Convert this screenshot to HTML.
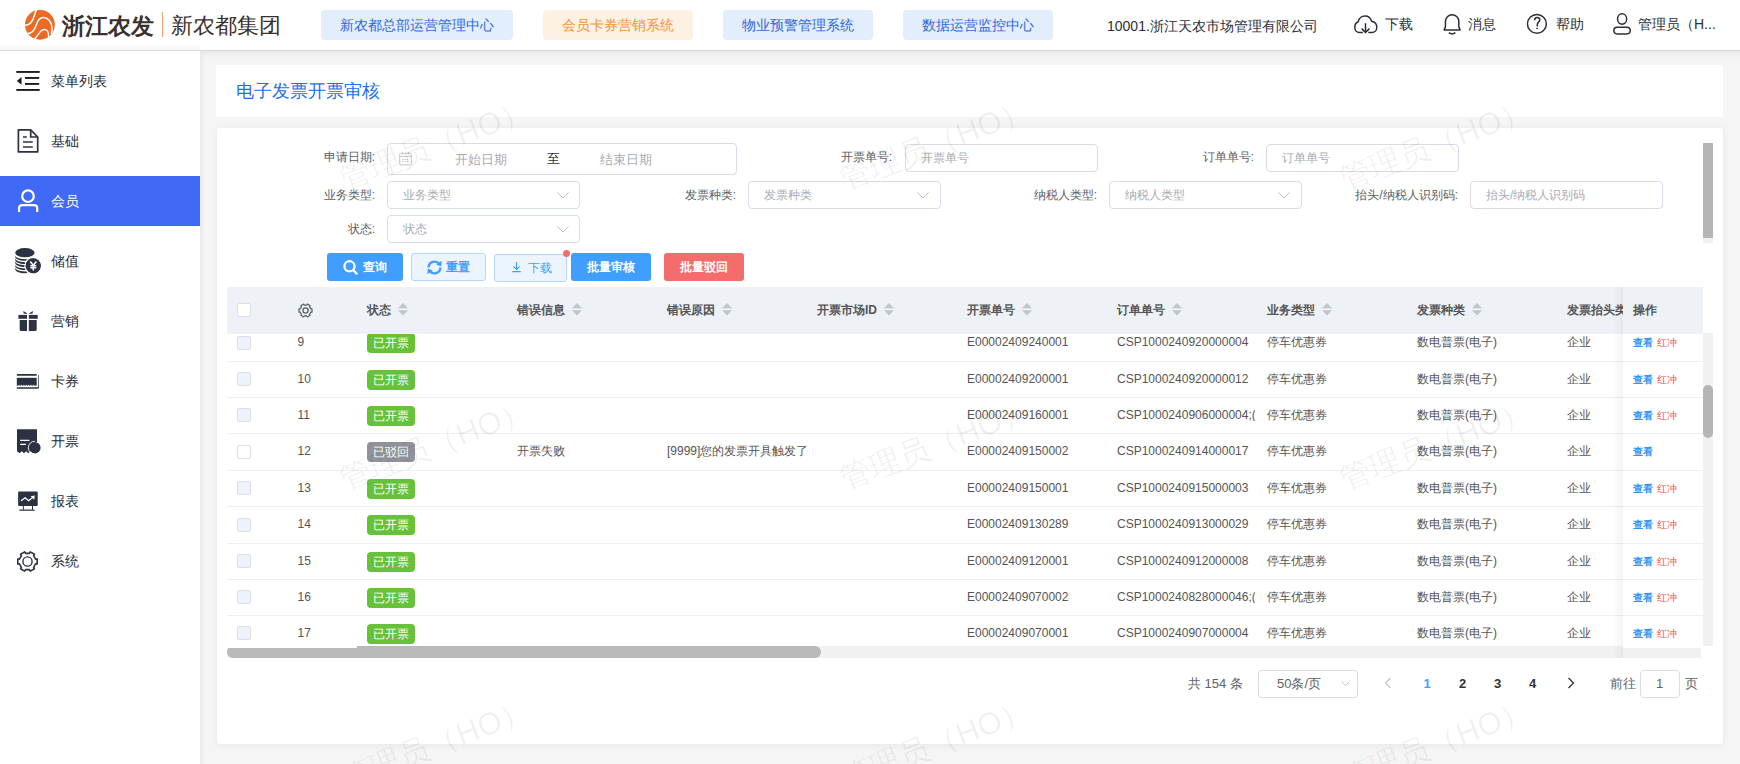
<!DOCTYPE html><html><head><meta charset="utf-8"><style>
*{box-sizing:border-box;margin:0;padding:0}
html,body{width:1740px;height:764px;overflow:hidden;background:#f3f3f5;font-family:"Liberation Sans",sans-serif;color:#333}
.a{position:absolute}
.t{white-space:nowrap;line-height:1}
#hdr{left:0;top:0;width:1740px;height:51px;background:#fff;border-bottom:1px solid #dadadc;z-index:5}
.nav{top:10px;height:30px;border-radius:4px;font-size:14px;line-height:30px;text-align:center;color:#2f66e2;background:#e3eefc}
.hi{font-size:14px;color:#2b2f3a}
#side{left:0;top:50px;width:200px;height:714px;background:#fff;z-index:4}
#hsh{left:0;top:43px;width:200px;height:7px;background:linear-gradient(to bottom,rgba(0,0,0,0),rgba(0,0,0,.035));z-index:6}
.mi{left:0;width:200px;height:50px}
.mi .lbl{position:absolute;left:51px;top:18px;font-size:14px;line-height:14px;color:#262b38}
.card{background:#fff;border-radius:3px}
.lab{font-size:12px;color:#5a5e66;line-height:12px}
.inp{border:1px solid #d8dce6;border-radius:4px;background:#fff}
.ph{font-size:12px;color:#a8abb2;line-height:12px}
.btn{top:253px;height:28px;border-radius:3px;font-size:12px;line-height:28px;text-align:center}
.hd{font-size:12px;font-weight:bold;color:#555;line-height:12px}
.cell{font-size:12px;color:#555;line-height:12px}
.cb{width:14px;height:14px;border:1px solid #dcdfe6;border-radius:2px;background:#edf2fc}
.tag{width:48px;height:20px;border-radius:4px;color:#fff;font-size:12px;line-height:20px;text-align:center}
.wm{font-size:31px;color:rgba(0,0,0,.06);transform:rotate(-21deg);transform-origin:0 0;white-space:nowrap;line-height:1}
</style></head><body>
<div id="hdr" class="a">
<svg class="a" style="left:25px;top:10px" width="30" height="30" viewBox="0 0 30 30">
<circle cx="14.9" cy="14.8" r="14.9" fill="#ec6a24"/>
<path d="M11.6 -0.5 C9.5 3.5, 9.2 8.5, 6.2 12.2 C4.5 14.3, 2.5 15.3, -0.5 15.2" stroke="#fff" stroke-width="1.5" fill="none"/>
<path d="M2.5 23.6 C6.5 23.5, 9.5 20.5, 11.5 14.5 C13 10, 15.5 7.6, 18.3 7.6 C22.8 7.6, 26.5 11.5, 27 17.5 C27.2 20, 27 22, 26.2 24" stroke="#fff" stroke-width="1.5" fill="none"/>
<path d="M9.5 29 C12.5 26.5, 14 22.2, 17.2 20.2 C19.8 18.8, 22.8 19.8, 23.3 23 L23.6 27" stroke="#fff" stroke-width="1.4" fill="none"/>
</svg>
<div class="a t" style="left:62px;top:14.5px;font-size:23px;font-weight:bold;color:#3a302d">浙江农发</div>
<div class="a" style="left:162px;top:12px;width:1px;height:25px;background:#f0a070"></div>
<div class="a t" style="left:171px;top:15px;font-size:22px;color:#3a302d">新农都集团</div>
<div class="a nav" style="left:321px;width:192px">新农都总部运营管理中心</div>
<div class="a nav" style="left:543px;width:150px;background:#fdf1e4;color:#f0953a">会员卡券营销系统</div>
<div class="a nav" style="left:723px;width:150px">物业预警管理系统</div>
<div class="a nav" style="left:903px;width:150px">数据运营监控中心</div>
<div class="a t hi" style="left:1107px;top:19px">10001.浙江天农市场管理有限公司</div>
<svg class="a" style="left:1353px;top:14px" width="26" height="21" viewBox="0 0 26 21" fill="none" stroke="#2b2f3a" stroke-width="1.5">
<path d="M9.8 18.5 H6.5 C3.8 18.5 1.8 16.2 1.8 13.2 C1.8 10.5 3.2 8.5 5.2 7.8 C5.8 4.5 8.6 2 12 2 C15.2 2 17.8 4.2 18.6 7.2 C21.6 7.8 23.8 10.2 23.8 13.2 C23.8 16.2 21.6 18.5 18.8 18.5 H15.3"/>
<path d="M12.5 9.2 V18.5 M8.6 14.6 L12.5 18.5 L16.4 14.6"/>
</svg>
<div class="a t hi" style="left:1385px;top:17px">下载</div>
<svg class="a" style="left:1442px;top:12px" width="21" height="23" viewBox="0 0 21 23" fill="none" stroke="#2b2f3a" stroke-width="1.5">
<path d="M3.45 14.9 V9.5 A6.7 6.7 0 0 1 16.85 9.5 V14.9 L18.1 17.9 H2.1 L3.45 14.9 Z" stroke-linejoin="round"/>
<path d="M6.8 20.6 Q10.1 23.2 13.4 20.6"/>
</svg>
<div class="a t hi" style="left:1468px;top:17px">消息</div>
<svg class="a" style="left:1525px;top:12px" width="24" height="24" viewBox="0 0 24 24" fill="none" stroke="#2b2f3a" stroke-width="1.5">
<circle cx="11.9" cy="11.9" r="9.45"/>
<path d="M9.6 8.3 C9.6 6.5 10.7 5.6 12.2 5.6 C13.8 5.6 14.8 6.6 14.8 7.9 C14.8 9.9 12.3 10.4 12.3 12.4 V14.5"/>
<rect x="11.2" y="15.9" width="1.8" height="1.1" fill="#2b2f3a" stroke="none"/>
</svg>
<div class="a t hi" style="left:1556px;top:17px">帮助</div>
<svg class="a" style="left:1612px;top:12px" width="21" height="24" viewBox="0 0 21 24" fill="none" stroke="#2b2f3a" stroke-width="1.5">
<ellipse cx="10.1" cy="7" rx="4.55" ry="5.15"/>
<rect x="1.85" y="15.25" width="16.4" height="6.7" rx="3.35"/>
</svg>
<div class="a t hi" style="left:1638px;top:17px">管理员（H...</div>
</div>
<div id="hsh" class="a"></div>
<div id="side" class="a">
<div class="a mi" style="top:6px;"><div class="lbl t" style="">菜单列表</div><svg class="a" style="left:16px;top:14px" width="25" height="22" viewBox="0 0 25 22"><g fill="#1c1c1e"><rect x="0.3" y="1" width="23.4" height="1.9"/><rect x="9" y="7" width="14.2" height="1.9"/><rect x="9" y="13" width="14.2" height="1.9"/><rect x="0.3" y="19" width="23.4" height="1.9"/><path d="M0.8 10.9 L5.5 7 V14.7 Z"/></g></svg></div>
<div class="a mi" style="top:66px;"><div class="lbl t" style="">基础</div><svg class="a" style="left:17px;top:13px" width="22" height="25" viewBox="0 0 22 25" fill="none" stroke="#2c3242" stroke-width="1.7"><path d="M1.4 0.9 H13.7 L20.7 8 V22.9 H1.4 Z" stroke-linejoin="round"/><path d="M13.7 0.9 V8 H20.7"/><path d="M6 8 H9.8 M6 13 H15.8 M6 18 H15.8"/></svg></div>
<div class="a mi" style="top:126px;background:#4069f6;"><div class="lbl t" style="color:#fff;">会员</div><svg class="a" style="left:16px;top:12px" width="25" height="25" viewBox="0 0 25 25" fill="none" stroke="#fff" stroke-width="2.2"><circle cx="12" cy="8.2" r="5.8"/><path d="M3.1 23.9 V19.8 C3.1 18 4.4 17.1 6.3 17.1 H18 C19.9 17.1 21.2 18 21.2 19.8 V23.9"/></svg></div>
<div class="a mi" style="top:186px;"><div class="lbl t" style="">储值</div><svg class="a" style="left:14px;top:12px" width="28" height="27" viewBox="0 0 28 27"><g fill="#2c3242"><ellipse cx="10.9" cy="4.7" rx="9.7" ry="4.6"/>
<path d="M1.2 7.3 C1.2 9.5 5.5 11.2 10.9 11.2 C14 11.2 16.8 10.6 18.5 9.7 L17 11.7 C15.3 12.4 13.2 12.8 10.9 12.8 C5.5 12.8 1.2 11 1.2 8.8Z"/>
<path d="M1.2 10.3 C1.2 12.5 5.5 14.2 10.9 14.2 C12.3 14.2 13.6 14.1 14.8 13.9 L13.5 15.8 C12.7 15.9 11.8 15.9 10.9 15.9 C5.5 15.9 1.2 14.1 1.2 11.9Z"/>
<path d="M1.2 13.3 C1.2 15.5 5.5 17.2 10.9 17.2 L12.4 17.2 L12.1 18.9 C11.7 18.9 11.3 18.9 10.9 18.9 C5.5 18.9 1.2 17.1 1.2 14.9Z"/>
<path d="M1.2 16.4 C1.2 18.6 5.5 20.3 10.9 20.3 L12 20.3 L12.3 22 C11.8 22 11.4 22 10.9 22 C5.5 22 1.2 20.2 1.2 18Z"/>
<path d="M1.2 19.5 C1.2 21.7 5.5 23.4 10.9 23.4 L12.9 23.3 L13.9 25.1 C12.9 25.2 11.9 25.2 10.9 25.2 C5.5 25.2 1.2 23.4 1.2 21.2Z"/>
<circle cx="19.3" cy="17.8" r="7.7"/></g><circle cx="19.3" cy="17.8" r="8.4" fill="none" stroke="#fff" stroke-width="1.1"/><path d="M16.2 13.6 L19.3 17.3 L22.4 13.6 M19.3 17.3 V22.5 M16.3 17.8 H22.3 M16.3 19.8 H22.3" stroke="#fff" stroke-width="1.5" fill="none"/></svg></div>
<div class="a mi" style="top:246px;"><div class="lbl t" style="">营销</div><svg class="a" style="left:17px;top:14px" width="22" height="22" viewBox="0 0 22 22"><g fill="#2c3242"><rect x="1.4" y="4.9" width="8.6" height="3.9"/><rect x="11.8" y="4.9" width="8.9" height="3.9"/><path d="M2.7 9.9 H10 V20.9 H4.2 Q2.7 20.9 2.7 19.4Z"/><path d="M11.8 9.9 H19.7 V19.4 Q19.7 20.9 18.2 20.9 H11.8Z"/><path d="M6.4 1 L10.3 3.6 L9.6 4 L6.6 3.6Z M15.9 1 L12 3.6 L12.7 4 L15.7 3.6Z"/></g></svg></div>
<div class="a mi" style="top:306px;"><div class="lbl t" style="">卡券</div><svg class="a" style="left:16px;top:16px" width="24" height="18" viewBox="0 0 24 18"><g fill="#2c3242"><rect x="0.8" y="1.9" width="19.9" height="1.8" rx="0.5"/><rect x="0.8" y="5.8" width="19.9" height="7.9"/><path d="M0.8 15.2 H21.6 Q22.3 15.2 22.3 14.5 V3 H23 V15.2 Q23 16.8 21.5 16.8 H0.8Z"/></g><path d="M2.5 13.4 H19.5" stroke="#fff" stroke-width="0.9" stroke-dasharray="1.2 1.2"/></svg></div>
<div class="a mi" style="top:366px;"><div class="lbl t" style="">开票</div><svg class="a" style="left:16px;top:12px" width="26" height="27" viewBox="0 0 26 27"><path d="M1.5 1.2 H20.5 Q21 1.2 21 1.7 V14 C17.5 14 15 16.5 15 20 C15 21.3 15.3 22.4 15.8 23.3 L14.5 23.3 L12.3 25.3 L10.2 23.3 L8 25.3 L5.8 23.3 L3.6 25.3 L1 23.3 V1.7 Q1 1.2 1.5 1.2Z" fill="#2c3242"/><circle cx="18.9" cy="19.8" r="5.7" fill="#2c3242"/><path d="M18.9 13.2 A6.6 6.6 0 0 0 18.9 26.4" stroke="#fff" stroke-width="0.9" fill="none"/><path d="M4.2 12.4 H13.4 M4.2 16.3 H10" stroke="#fff" stroke-width="1.2"/></svg></div>
<div class="a mi" style="top:426px;"><div class="lbl t" style="">报表</div><svg class="a" style="left:16px;top:14px" width="24" height="22" viewBox="0 0 24 22"><rect x="2.1" y="1.5" width="19.6" height="14.4" rx="0.8" fill="#2c3242"/><path d="M5 10.7 L9.2 7.8 L12.6 10.7 L17.3 7" stroke="#fff" stroke-width="1.3" fill="none"/><path d="M18.8 5.6 L14.6 6.2 L18.2 9.8 Z" fill="#fff"/><path d="M7.4 15.9 V19.8 M16.5 15.9 V19.8" stroke="#2c3242" stroke-width="1"/><rect x="3.2" y="19.6" width="15.5" height="1.2" rx="0.6" fill="#2c3242"/></svg></div>
<div class="a mi" style="top:486px;"><div class="lbl t" style="">系统</div><svg class="a" style="left:15.4px;top:12.6px" width="25" height="25" viewBox="0 0 25 25" fill="none" stroke="#2c3242" stroke-width="1.6"><path d="M20.55 14.89 L22.20 14.92 L22.20 10.08 L20.55 10.11 L18.59 6.72 L19.45 5.31 L15.26 2.89 L14.46 4.33 L10.54 4.33 L9.74 2.89 L5.55 5.31 L6.41 6.72 L4.45 10.11 L2.80 10.08 L2.80 14.92 L4.45 14.89 L6.41 18.28 L5.55 19.69 L9.74 22.11 L10.54 20.67 L14.46 20.67 L15.26 22.11 L19.45 19.69 L18.59 18.28 Z" stroke-linejoin="round"/><circle cx="12.5" cy="12.5" r="4.6" stroke-width="1.4"/></svg></div>
</div>
<div class="a" style="left:200px;top:50px;width:1540px;height:714px;background:#f5f5f6;box-shadow:inset 4px 6px 6px -3px rgba(0,0,0,.07)"></div>
<div class="a" style="left:216px;top:65px;width:1507px;height:52px;background:#fff"></div>
<div class="a t" style="left:236px;top:82px;font-size:18px;color:#1a6ff0">电子发票开票审核</div>
<div class="a card" style="left:217px;top:127.6px;width:1506px;height:616.4px;box-shadow:0 1px 8px rgba(0,0,0,.06)"></div>
<div class="a t lab" style="right:1365px;top:151px">申请日期:</div>
<div class="a inp" style="left:387px;top:143px;width:350px;height:32px"></div>
<svg class="a" style="left:399px;top:152px" width="13" height="14" viewBox="0 0 13 14" fill="none" stroke="#c0c4cc" stroke-width="1"><rect x="0.7" y="1.3" width="11.6" height="11.6" rx="1"/><path d="M0.7 4.4 H12.3 M3.4 0 V2.6 M9.6 0 V2.6"/><path d="M3 7.4 H10.2 M3 9.5 H10.2" stroke-dasharray="1.4 1" stroke-width="1.1"/></svg>
<div class="a t ph" style="left:455px;top:153px;font-size:13px;line-height:13px">开始日期</div>
<div class="a t" style="left:547px;top:152px;font-size:13px;line-height:13px;color:#303133">至</div>
<div class="a t ph" style="left:600px;top:153px;font-size:13px;line-height:13px">结束日期</div>
<div class="a t lab" style="right:848px;top:151px">开票单号:</div>
<div class="a inp" style="left:905px;top:144px;width:193px;height:28px"></div>
<div class="a t ph" style="left:921px;top:152px">开票单号</div>
<div class="a t lab" style="right:486px;top:151px">订单单号:</div>
<div class="a inp" style="left:1266px;top:144px;width:193px;height:28px"></div>
<div class="a t ph" style="left:1282px;top:152px">订单单号</div>
<div class="a t lab" style="right:1365px;top:189px">业务类型:</div>
<div class="a inp" style="left:387px;top:181px;width:193px;height:28px"></div>
<div class="a t ph" style="left:403px;top:189px">业务类型</div>
<svg class="a" style="left:557px;top:192px" width="12" height="7" viewBox="0 0 12 7"><path d="M0.5 0.5 L6 6 L11.5 0.5" stroke="#b8bcc6" stroke-width="1" fill="none"/></svg>
<div class="a t lab" style="right:1004px;top:189px">发票种类:</div>
<div class="a inp" style="left:748px;top:181px;width:193px;height:28px"></div>
<div class="a t ph" style="left:764px;top:189px">发票种类</div>
<svg class="a" style="left:917px;top:192px" width="12" height="7" viewBox="0 0 12 7"><path d="M0.5 0.5 L6 6 L11.5 0.5" stroke="#b8bcc6" stroke-width="1" fill="none"/></svg>
<div class="a t lab" style="right:643px;top:189px">纳税人类型:</div>
<div class="a inp" style="left:1109px;top:181px;width:193px;height:28px"></div>
<div class="a t ph" style="left:1125px;top:189px">纳税人类型</div>
<svg class="a" style="left:1278px;top:192px" width="12" height="7" viewBox="0 0 12 7"><path d="M0.5 0.5 L6 6 L11.5 0.5" stroke="#b8bcc6" stroke-width="1" fill="none"/></svg>
<div class="a t lab" style="right:282px;top:189px">抬头/纳税人识别码:</div>
<div class="a inp" style="left:1470px;top:181px;width:193px;height:28px"></div>
<div class="a t ph" style="left:1486px;top:189px">抬头/纳税人识别码</div>
<div class="a t lab" style="right:1365px;top:223px">状态:</div>
<div class="a inp" style="left:387px;top:215px;width:193px;height:28px"></div>
<div class="a t ph" style="left:403px;top:223px">状态</div>
<svg class="a" style="left:557px;top:226px" width="12" height="7" viewBox="0 0 12 7"><path d="M0.5 0.5 L6 6 L11.5 0.5" stroke="#b8bcc6" stroke-width="1" fill="none"/></svg>
<div class="a" style="left:1703px;top:143px;width:10px;height:100px;background:#f1f1f1"></div>
<div class="a" style="left:1703px;top:143px;width:10px;height:95px;background:#b5b5b5"></div>
<div class="a btn" style="left:327px;width:76px;background:#409eff;color:#fff;font-weight:bold"><svg style="position:absolute;left:15px;top:6px" width="16" height="17" viewBox="0 0 16 17" fill="none" stroke="#fff" stroke-width="2.3"><circle cx="7.5" cy="7.3" r="5.1"/><path d="M11.2 11 L14.6 14.6" stroke-linecap="round"/></svg><span style="position:absolute;left:36px;top:-0.5px">查询</span></div>
<div class="a btn" style="left:411px;width:75px;background:#ecf5ff;border:1px solid #b3d8ff;color:#409eff;font-weight:bold"><svg style="position:absolute;left:14px;top:5px" width="17" height="17" viewBox="0 0 17 17" fill="none" stroke="#409eff" stroke-width="2.3"><path d="M2.6 8.5 A5.9 5.9 0 0 1 13.2 5.0"/><path d="M14.4 8.5 A5.9 5.9 0 0 1 3.8 12.0"/><path d="M15.6 1.8 L15.3 7.6 L10.2 5.6 Z M1.4 15.2 L1.7 9.4 L6.8 11.4 Z" fill="#409eff" stroke="none"/></svg><span style="position:absolute;left:34px;top:-1.5px">重置</span></div>
<div class="a btn" style="left:494px;top:254px;width:73px;height:28px;background:#ecf5ff;border:1px solid #b3d8ff;color:#409eff"><svg style="position:absolute;left:16px;top:6px" width="11" height="12" viewBox="0 0 11 12" fill="none" stroke="#409eff" stroke-width="1.1"><path d="M5.5 1 V8.3 M2.4 5.3 L5.5 8.4 L8.6 5.3 M1.2 10.6 H9.8"/></svg><span style="position:absolute;left:33px;top:-1.5px">下载</span></div>
<div class="a" style="left:562.5px;top:250px;width:7px;height:7px;border-radius:3.5px;background:#f56c6c"></div>
<div class="a btn" style="left:571px;width:80px;background:#409eff;color:#fff;font-weight:bold">批量审核</div>
<div class="a btn" style="left:664px;width:80px;background:#f56c6c;color:#fff;font-weight:bold">批量驳回</div>
<div class="a" style="left:227px;top:334px;width:1476px;height:312px;overflow:hidden;background:#fff">
<div class="a" style="left:0;top:-9px;width:1476px;height:37px;border-bottom:1px solid #ebeef5">
<div class="a cb" style="left:10px;top:10.7px;background:#edf2fc"></div>
<div class="a t cell" style="left:70.5px;top:11.1px">9</div>
<div class="a tag" style="left:140px;top:8.0px;background:#67c23a">已开票</div>
<div class="a t cell" style="left:740px;top:11.3px">E00002409240001</div>
<div class="a t cell" style="left:890px;top:11.3px;width:137.8px;overflow:hidden">CSP1000240920000004</div>
<div class="a t cell" style="left:1040px;top:11.3px">停车优惠券</div>
<div class="a t cell" style="left:1190px;top:11.3px">数电普票(电子)</div>
<div class="a t cell" style="left:1340px;top:11.3px">企业</div>
</div>
<div class="a" style="left:1396px;top:-9px;width:80px;height:37px;background:#fff;border-bottom:1px solid #ebeef5">
<div class="a t" style="left:10px;top:13.0px;font-size:10px;line-height:10px;color:#3593f6;font-weight:bold">查看</div>
<div class="a t" style="left:34px;top:13.0px;font-size:10px;line-height:10px;color:#f5494c">红冲</div>
</div>
<div class="a" style="left:0;top:28px;width:1476px;height:36px;border-bottom:1px solid #ebeef5">
<div class="a cb" style="left:10px;top:10.2px;background:#edf2fc"></div>
<div class="a t cell" style="left:70.5px;top:10.6px">10</div>
<div class="a tag" style="left:140px;top:7.5px;background:#67c23a">已开票</div>
<div class="a t cell" style="left:740px;top:10.8px">E00002409200001</div>
<div class="a t cell" style="left:890px;top:10.8px;width:137.8px;overflow:hidden">CSP1000240920000012</div>
<div class="a t cell" style="left:1040px;top:10.8px">停车优惠券</div>
<div class="a t cell" style="left:1190px;top:10.8px">数电普票(电子)</div>
<div class="a t cell" style="left:1340px;top:10.8px">企业</div>
</div>
<div class="a" style="left:1396px;top:28px;width:80px;height:36px;background:#fff;border-bottom:1px solid #ebeef5">
<div class="a t" style="left:10px;top:12.5px;font-size:10px;line-height:10px;color:#3593f6;font-weight:bold">查看</div>
<div class="a t" style="left:34px;top:12.5px;font-size:10px;line-height:10px;color:#f5494c">红冲</div>
</div>
<div class="a" style="left:0;top:64px;width:1476px;height:36px;border-bottom:1px solid #ebeef5">
<div class="a cb" style="left:10px;top:10.2px;background:#edf2fc"></div>
<div class="a t cell" style="left:70.5px;top:10.6px">11</div>
<div class="a tag" style="left:140px;top:7.5px;background:#67c23a">已开票</div>
<div class="a t cell" style="left:740px;top:10.8px">E00002409160001</div>
<div class="a t cell" style="left:890px;top:10.8px;width:137.8px;overflow:hidden">CSP1000240906000004;(</div>
<div class="a t cell" style="left:1040px;top:10.8px">停车优惠券</div>
<div class="a t cell" style="left:1190px;top:10.8px">数电普票(电子)</div>
<div class="a t cell" style="left:1340px;top:10.8px">企业</div>
</div>
<div class="a" style="left:1396px;top:64px;width:80px;height:36px;background:#fff;border-bottom:1px solid #ebeef5">
<div class="a t" style="left:10px;top:12.5px;font-size:10px;line-height:10px;color:#3593f6;font-weight:bold">查看</div>
<div class="a t" style="left:34px;top:12.5px;font-size:10px;line-height:10px;color:#f5494c">红冲</div>
</div>
<div class="a" style="left:0;top:100px;width:1476px;height:37px;border-bottom:1px solid #ebeef5">
<div class="a cb" style="left:10px;top:10.7px;background:#fff"></div>
<div class="a t cell" style="left:70.5px;top:11.1px">12</div>
<div class="a tag" style="left:140px;top:8.0px;background:#909399">已驳回</div>
<div class="a t cell" style="left:290px;top:11.3px">开票失败</div>
<div class="a t cell" style="left:440px;top:11.3px">[9999]您的发票开具触发了</div>
<div class="a t cell" style="left:740px;top:11.3px">E00002409150002</div>
<div class="a t cell" style="left:890px;top:11.3px;width:137.8px;overflow:hidden">CSP1000240914000017</div>
<div class="a t cell" style="left:1040px;top:11.3px">停车优惠券</div>
<div class="a t cell" style="left:1190px;top:11.3px">数电普票(电子)</div>
<div class="a t cell" style="left:1340px;top:11.3px">企业</div>
</div>
<div class="a" style="left:1396px;top:100px;width:80px;height:37px;background:#fff;border-bottom:1px solid #ebeef5">
<div class="a t" style="left:10px;top:13.0px;font-size:10px;line-height:10px;color:#3593f6;font-weight:bold">查看</div>
</div>
<div class="a" style="left:0;top:137px;width:1476px;height:36px;border-bottom:1px solid #ebeef5">
<div class="a cb" style="left:10px;top:10.2px;background:#edf2fc"></div>
<div class="a t cell" style="left:70.5px;top:10.6px">13</div>
<div class="a tag" style="left:140px;top:7.5px;background:#67c23a">已开票</div>
<div class="a t cell" style="left:740px;top:10.8px">E00002409150001</div>
<div class="a t cell" style="left:890px;top:10.8px;width:137.8px;overflow:hidden">CSP1000240915000003</div>
<div class="a t cell" style="left:1040px;top:10.8px">停车优惠券</div>
<div class="a t cell" style="left:1190px;top:10.8px">数电普票(电子)</div>
<div class="a t cell" style="left:1340px;top:10.8px">企业</div>
</div>
<div class="a" style="left:1396px;top:137px;width:80px;height:36px;background:#fff;border-bottom:1px solid #ebeef5">
<div class="a t" style="left:10px;top:12.5px;font-size:10px;line-height:10px;color:#3593f6;font-weight:bold">查看</div>
<div class="a t" style="left:34px;top:12.5px;font-size:10px;line-height:10px;color:#f5494c">红冲</div>
</div>
<div class="a" style="left:0;top:173px;width:1476px;height:37px;border-bottom:1px solid #ebeef5">
<div class="a cb" style="left:10px;top:10.7px;background:#edf2fc"></div>
<div class="a t cell" style="left:70.5px;top:11.1px">14</div>
<div class="a tag" style="left:140px;top:8.0px;background:#67c23a">已开票</div>
<div class="a t cell" style="left:740px;top:11.3px">E00002409130289</div>
<div class="a t cell" style="left:890px;top:11.3px;width:137.8px;overflow:hidden">CSP1000240913000029</div>
<div class="a t cell" style="left:1040px;top:11.3px">停车优惠券</div>
<div class="a t cell" style="left:1190px;top:11.3px">数电普票(电子)</div>
<div class="a t cell" style="left:1340px;top:11.3px">企业</div>
</div>
<div class="a" style="left:1396px;top:173px;width:80px;height:37px;background:#fff;border-bottom:1px solid #ebeef5">
<div class="a t" style="left:10px;top:13.0px;font-size:10px;line-height:10px;color:#3593f6;font-weight:bold">查看</div>
<div class="a t" style="left:34px;top:13.0px;font-size:10px;line-height:10px;color:#f5494c">红冲</div>
</div>
<div class="a" style="left:0;top:210px;width:1476px;height:36px;border-bottom:1px solid #ebeef5">
<div class="a cb" style="left:10px;top:10.2px;background:#edf2fc"></div>
<div class="a t cell" style="left:70.5px;top:10.6px">15</div>
<div class="a tag" style="left:140px;top:7.5px;background:#67c23a">已开票</div>
<div class="a t cell" style="left:740px;top:10.8px">E00002409120001</div>
<div class="a t cell" style="left:890px;top:10.8px;width:137.8px;overflow:hidden">CSP1000240912000008</div>
<div class="a t cell" style="left:1040px;top:10.8px">停车优惠券</div>
<div class="a t cell" style="left:1190px;top:10.8px">数电普票(电子)</div>
<div class="a t cell" style="left:1340px;top:10.8px">企业</div>
</div>
<div class="a" style="left:1396px;top:210px;width:80px;height:36px;background:#fff;border-bottom:1px solid #ebeef5">
<div class="a t" style="left:10px;top:12.5px;font-size:10px;line-height:10px;color:#3593f6;font-weight:bold">查看</div>
<div class="a t" style="left:34px;top:12.5px;font-size:10px;line-height:10px;color:#f5494c">红冲</div>
</div>
<div class="a" style="left:0;top:246px;width:1476px;height:36px;border-bottom:1px solid #ebeef5">
<div class="a cb" style="left:10px;top:10.2px;background:#edf2fc"></div>
<div class="a t cell" style="left:70.5px;top:10.6px">16</div>
<div class="a tag" style="left:140px;top:7.5px;background:#67c23a">已开票</div>
<div class="a t cell" style="left:740px;top:10.8px">E00002409070002</div>
<div class="a t cell" style="left:890px;top:10.8px;width:137.8px;overflow:hidden">CSP1000240828000046;(</div>
<div class="a t cell" style="left:1040px;top:10.8px">停车优惠券</div>
<div class="a t cell" style="left:1190px;top:10.8px">数电普票(电子)</div>
<div class="a t cell" style="left:1340px;top:10.8px">企业</div>
</div>
<div class="a" style="left:1396px;top:246px;width:80px;height:36px;background:#fff;border-bottom:1px solid #ebeef5">
<div class="a t" style="left:10px;top:12.5px;font-size:10px;line-height:10px;color:#3593f6;font-weight:bold">查看</div>
<div class="a t" style="left:34px;top:12.5px;font-size:10px;line-height:10px;color:#f5494c">红冲</div>
</div>
<div class="a" style="left:0;top:282px;width:1476px;height:36px;border-bottom:1px solid #ebeef5">
<div class="a cb" style="left:10px;top:10.2px;background:#edf2fc"></div>
<div class="a t cell" style="left:70.5px;top:10.6px">17</div>
<div class="a tag" style="left:140px;top:7.5px;background:#67c23a">已开票</div>
<div class="a t cell" style="left:740px;top:10.8px">E00002409070001</div>
<div class="a t cell" style="left:890px;top:10.8px;width:137.8px;overflow:hidden">CSP1000240907000004</div>
<div class="a t cell" style="left:1040px;top:10.8px">停车优惠券</div>
<div class="a t cell" style="left:1190px;top:10.8px">数电普票(电子)</div>
<div class="a t cell" style="left:1340px;top:10.8px">企业</div>
</div>
<div class="a" style="left:1396px;top:282px;width:80px;height:36px;background:#fff;border-bottom:1px solid #ebeef5">
<div class="a t" style="left:10px;top:12.5px;font-size:10px;line-height:10px;color:#3593f6;font-weight:bold">查看</div>
<div class="a t" style="left:34px;top:12.5px;font-size:10px;line-height:10px;color:#f5494c">红冲</div>
</div>
</div>
<div class="a" style="left:227px;top:287px;width:1476px;height:47px;background:#eef1f6"></div>
<div class="a cb" style="left:237px;top:303px;background:#fff"></div>
<svg class="a" style="left:297.5px;top:302.5px" width="15" height="15" viewBox="0 0 15 15" fill="none" stroke="#5a5e66" stroke-width="1.2"><path d="M12.87 9.09 L14.00 9.12 L14.00 5.88 L12.87 5.91 L11.56 3.65 L12.15 2.68 L9.35 1.06 L8.81 2.05 L6.19 2.05 L5.65 1.06 L2.85 2.68 L3.44 3.65 L2.13 5.91 L1.00 5.88 L1.00 9.12 L2.13 9.09 L3.44 11.35 L2.85 12.32 L5.65 13.94 L6.19 12.95 L8.81 12.95 L9.35 13.94 L12.15 12.32 L11.56 11.35 Z" stroke-linejoin="round"/><circle cx="7.5" cy="7.5" r="2.6" stroke-width="1.3"/></svg>
<div class="a t hd" style="left:367px;top:304px">状态</div>
<svg class="a" style="left:398px;top:303px" width="10" height="13" viewBox="0 0 10 13"><path d="M5 0 L10 5.3 H0Z M5 12.5 L10 7.2 H0Z" fill="#c0c4cc"/></svg>
<div class="a t hd" style="left:517px;top:304px">错误信息</div>
<svg class="a" style="left:572px;top:303px" width="10" height="13" viewBox="0 0 10 13"><path d="M5 0 L10 5.3 H0Z M5 12.5 L10 7.2 H0Z" fill="#c0c4cc"/></svg>
<div class="a t hd" style="left:667px;top:304px">错误原因</div>
<svg class="a" style="left:722px;top:303px" width="10" height="13" viewBox="0 0 10 13"><path d="M5 0 L10 5.3 H0Z M5 12.5 L10 7.2 H0Z" fill="#c0c4cc"/></svg>
<div class="a t hd" style="left:817px;top:304px">开票市场ID</div>
<svg class="a" style="left:884px;top:303px" width="10" height="13" viewBox="0 0 10 13"><path d="M5 0 L10 5.3 H0Z M5 12.5 L10 7.2 H0Z" fill="#c0c4cc"/></svg>
<div class="a t hd" style="left:967px;top:304px">开票单号</div>
<svg class="a" style="left:1022px;top:303px" width="10" height="13" viewBox="0 0 10 13"><path d="M5 0 L10 5.3 H0Z M5 12.5 L10 7.2 H0Z" fill="#c0c4cc"/></svg>
<div class="a t hd" style="left:1117px;top:304px">订单单号</div>
<svg class="a" style="left:1172px;top:303px" width="10" height="13" viewBox="0 0 10 13"><path d="M5 0 L10 5.3 H0Z M5 12.5 L10 7.2 H0Z" fill="#c0c4cc"/></svg>
<div class="a t hd" style="left:1267px;top:304px">业务类型</div>
<svg class="a" style="left:1322px;top:303px" width="10" height="13" viewBox="0 0 10 13"><path d="M5 0 L10 5.3 H0Z M5 12.5 L10 7.2 H0Z" fill="#c0c4cc"/></svg>
<div class="a t hd" style="left:1417px;top:304px">发票种类</div>
<svg class="a" style="left:1472px;top:303px" width="10" height="13" viewBox="0 0 10 13"><path d="M5 0 L10 5.3 H0Z M5 12.5 L10 7.2 H0Z" fill="#c0c4cc"/></svg>
<div class="a" style="left:1557px;top:287px;width:66px;height:47px;overflow:hidden"><div class="a t hd" style="left:10px;top:17px">发票抬头类型</div></div>
<div class="a" style="left:1623px;top:287px;width:80px;height:47px;background:#eef1f6"><div class="a t hd" style="left:10px;top:17px">操作</div></div>
<div class="a" style="left:1703px;top:333px;width:10px;height:313px;background:#f1f1f1"></div>
<div class="a" style="left:1703px;top:385px;width:10px;height:53px;border-radius:5px;background:#b5b5b5"></div>
<div class="a" style="left:227px;top:646px;width:1476px;height:12px;background:#f1f1f1"></div>
<div class="a" style="left:227px;top:646px;width:594px;height:12px;border-radius:6px;background:#b9b9b9"></div>
<div class="a" style="left:227px;top:645px;width:130px;height:2.5px;background:#fff"></div>
<div class="a" style="left:1623px;top:646px;width:80px;height:12px;background:#fff;border-bottom:1px solid #ebeef5"></div>
<div class="a" style="left:1623px;top:648px;width:77.7px;height:9.5px;background:#f1f1f1"></div>
<div class="a" style="left:1613px;top:287px;width:10px;height:371px;background:linear-gradient(to right,rgba(0,0,0,0),rgba(0,0,0,.045))"></div>
<div class="a t" style="left:1188px;top:677px;font-size:13px;line-height:13px;color:#606266">共 154 条</div>
<div class="a inp" style="left:1258px;top:670px;width:100px;height:28px"></div>
<div class="a t" style="left:1277px;top:677px;font-size:13px;line-height:13px;color:#606266">50条/页</div>
<svg class="a" style="left:1341px;top:681px" width="9" height="6" viewBox="0 0 9 6"><path d="M0.5 0.5 L4.5 4.5 L8.5 0.5" stroke="#c0c4cc" stroke-width="1" fill="none"/></svg>
<svg class="a" style="left:1384px;top:677px" width="8" height="12" viewBox="0 0 8 12"><path d="M6.5 1 L1.5 6 L6.5 11" stroke="#c0c4cc" stroke-width="1.3" fill="none"/></svg>
<div class="a t" style="left:1423.5px;top:677px;font-size:13px;line-height:13px;font-weight:bold;color:#409eff">1</div>
<div class="a t" style="left:1459px;top:677px;font-size:13px;line-height:13px;font-weight:bold;color:#303133">2</div>
<div class="a t" style="left:1494px;top:677px;font-size:13px;line-height:13px;font-weight:bold;color:#303133">3</div>
<div class="a t" style="left:1529px;top:677px;font-size:13px;line-height:13px;font-weight:bold;color:#303133">4</div>
<svg class="a" style="left:1567px;top:677px" width="8" height="12" viewBox="0 0 8 12"><path d="M1.5 1 L6.5 6 L1.5 11" stroke="#303133" stroke-width="1.3" fill="none"/></svg>
<div class="a t" style="left:1610px;top:677px;font-size:13px;line-height:13px;color:#606266">前往</div>
<div class="a inp" style="left:1640px;top:670px;width:40px;height:28px"></div>
<div class="a t" style="left:1656px;top:677px;font-size:13px;line-height:13px;color:#606266">1</div>
<div class="a t" style="left:1685px;top:677px;font-size:13px;line-height:13px;color:#606266">页</div>
<div class="a wm" style="left:336px;top:166px">管理员（HO）</div>
<div class="a wm" style="left:836px;top:166px">管理员（HO）</div>
<div class="a wm" style="left:1336px;top:166px">管理员（HO）</div>
<div class="a wm" style="left:336px;top:466px">管理员（HO）</div>
<div class="a wm" style="left:836px;top:466px">管理员（HO）</div>
<div class="a wm" style="left:1336px;top:466px">管理员（HO）</div>
<div class="a wm" style="left:336px;top:766px">管理员（HO）</div>
<div class="a wm" style="left:836px;top:766px">管理员（HO）</div>
<div class="a wm" style="left:1336px;top:766px">管理员（HO）</div>
</body></html>
